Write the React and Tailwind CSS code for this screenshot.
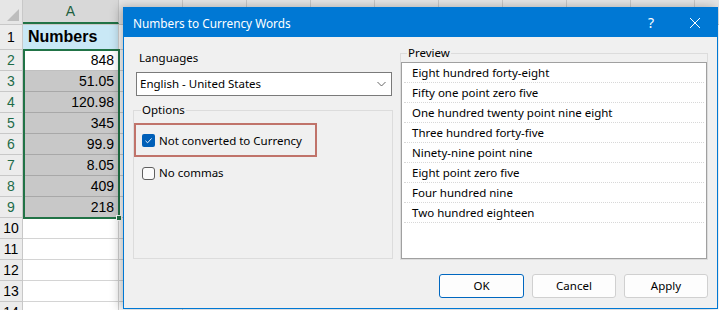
import React from "react";

const values = ["848", "51.05", "120.98", "345", "99.9", "8.05", "409", "218"];
const preview = [
  "Eight hundred forty-eight",
  "Fifty one point zero five",
  "One hundred twenty point nine eight",
  "Three hundred forty-five",
  "Ninety-nine point nine",
  "Eight point zero five",
  "Four hundred nine",
  "Two hundred eighteen",
];

const ui = { fontFamily: '"Noto Sans", "Open Sans", sans-serif' };
const xl = { fontFamily: '"Liberation Sans", Arial, sans-serif' };

const Sheet = () => {
  const rows = [];
  for (let r = 1; r <= 14; r++) rows.push(r);
  return (
    <div className="flex flex-col" style={xl}>
      {/* column headers */}
      <div className="flex h-[25px] bg-[#e6e6e6] border-b border-[#c8c8c8]">
        <div className="w-[23px] border-r border-[#c8c8c8] flex items-end justify-end pr-[3px] pb-[3px]">
          <div className="w-0 h-0 border-l-[12px] border-l-transparent border-b-[12px] border-b-[#bdbdbd]"></div>
        </div>
        <div className="w-[96px] border-r border-[#c8c8c8] border-b-2 border-b-[#217346] flex items-center justify-center text-[14px] text-[#1d5f3f] bg-[#d8d8d8]">
          A
        </div>
        {[0, 1, 2, 3, 4, 5, 6, 7, 8].map((i) => (
          <div key={i} className="w-[64px] shrink-0 border-r border-[#c8c8c8]"></div>
        ))}
      </div>
      {rows.map((r) => {
        const sel = r >= 2 && r <= 9;
        return (
          <div key={r} className={`flex ${r === 1 ? "h-[25px]" : "h-[21px]"}`}>
            <div
              className={`w-[23px] shrink-0 bg-[#ececec] border-r border-b border-[#c8c8c8] flex items-center justify-center text-[14px] ${
                sel ? "text-[#1d6b48]" : "text-black"
              }`}
            >
              {r}
            </div>
            {r === 1 ? (
              <div className="w-[96px] shrink-0 bg-[#c9e8f6] border-r border-b border-[#d4d4d4] flex items-center pl-[5px] text-[16px] font-bold">
                Numbers
              </div>
            ) : sel ? (
              <div
                className={`w-[96px] shrink-0 border-b ${
                  r === 2 ? "bg-white border-[#c0c0c0]" : "bg-[#c8c8c8] border-[#a8a8a8]"
                } flex items-center justify-end pr-[5px] text-[14px]`}
              >
                {values[r - 2]}
              </div>
            ) : (
              <div className="w-[96px] shrink-0 bg-white border-r border-b border-[#d4d4d4]"></div>
            )}
            <div className="w-[64px] shrink-0 bg-white border-r border-b border-[#d4d4d4]"></div>
          </div>
        );
      })}
    </div>
  );
};

const Legend = ({ children, left }) => (
  <span className={`absolute -top-[9px] ${left} px-[1px] bg-[#f0f0f0] text-[11.5px] leading-[16px] text-black`}>
    {children}
  </span>
);

const CheckRow = ({ checked, label }) => (
  <div className="flex items-center gap-[4px]">
    {checked ? (
      <div className="w-[13px] h-[13px] rounded-[2px] bg-[#005fb8] flex items-center justify-center">
        <svg width="9" height="9" viewBox="0 0 9 9">
          <path d="M1.5 4.8 L3.6 6.8 L7.6 2.4" fill="none" stroke="white" strokeWidth="0.9" />
        </svg>
      </div>
    ) : (
      <div className="w-[13px] h-[13px] rounded-[3px] border border-[#5f5f5f] bg-[#fbfbfb]"></div>
    )}
    <span className="text-[11.5px] leading-[16px] text-black">{label}</span>
  </div>
);

const Dialog = () => (
  <div
    className="absolute left-[123px] top-[7px] w-[595px] h-[302px] border border-[#0078d4] bg-[#f0f0f0] shadow-[-3px_0_10px_rgba(0,0,0,0.28)] flex flex-col"
    style={ui}
  >
    {/* title bar */}
    <div className="h-[29px] bg-[#0078d4] flex items-center text-white">
      <span className="ml-[9px] text-[11.8px] leading-[16px]">Numbers to Currency Words</span>
      <span className="ml-auto text-[14px] mr-[35px]">?</span>
      <svg width="12" height="12" viewBox="0 0 12 12" className="mr-[16px]">
        <path d="M1 1 L11 11 M11 1 L1 11" stroke="white" strokeWidth="1" />
      </svg>
    </div>

    <div className="flex items-start h-[223px] px-[9px]">
      {/* left column */}
      <div className="w-[260px] flex flex-col">
        <span className="mt-[13px] ml-[6px] text-[11.5px] leading-[16px]">Languages</span>
        <div className="mt-[6px] ml-[3px] w-[256px] h-[24px] bg-white border border-[#7a7a7a] flex items-center px-[3px]">
          <span className="text-[11.5px] leading-[16px]">English - United States</span>
          <svg width="9" height="6" viewBox="0 0 9 6" className="ml-auto mr-[2px]">
            <path d="M0.5 1 L4.5 5 L8.5 1" fill="none" stroke="#555" strokeWidth="0.9" />
          </svg>
        </div>
        <div className="relative mt-[14px] w-[260px] h-[149px] border border-[#dcdcdc]">
          <Legend left="left-[7px]">Options</Legend>
          <div className="mt-[12px] w-[183px] h-[34px] border-2 border-[#c0736a] flex items-center pl-[6px] pt-[1px]">
            <CheckRow checked label="Not converted to Currency" />
          </div>
          <div className="mt-[8px] pl-[8px]">
            <CheckRow label="No commas" />
          </div>
        </div>
      </div>

      {/* right column */}
      <div className="ml-[7px] mt-[16px] relative w-[309px] h-[207px] border border-[#dcdcdc]">
        <Legend left="left-[6px]">Preview</Legend>
        <div className="mt-[8px] h-[197px] bg-white border border-[#a0a0a0] flex flex-col">
          {preview.map((p) => (
            <div
              key={p}
              className="h-[20px] shrink-0 mx-[2px] border-b border-dotted border-[#d8d8d8] flex items-center pl-[8px] text-[11.5px] leading-[16px]"
            >
              {p}
            </div>
          ))}
        </div>
      </div>
    </div>

    {/* buttons */}
    <div className="mt-[14px] flex justify-end gap-[8px] pr-[9px]">
      <button className="w-[85px] h-[24px] rounded-[3px] bg-[#fdfdfd] border border-[#0067c0] text-[11.5px]">OK</button>
      <button className="w-[84px] h-[24px] rounded-[3px] bg-[#fdfdfd] border border-[#d0d0d0] text-[11.5px]">Cancel</button>
      <button className="w-[84px] h-[24px] rounded-[3px] bg-[#fdfdfd] border border-[#d0d0d0] text-[11.5px]">Apply</button>
    </div>
  </div>
);

export default function App() {
  return (
    <div className="relative w-[719px] h-[310px] overflow-hidden bg-white">
      <Sheet />
      {/* selection outline around A2:A9 */}
      <div className="absolute left-[23px] top-[49px] w-[97px] h-[170px] border-2 border-[#217346] pointer-events-none"></div>
      <div className="absolute left-[116px] top-[215px] w-[6px] h-[6px] bg-[#217346] border border-white"></div>
      <Dialog />
    </div>
  );
}
